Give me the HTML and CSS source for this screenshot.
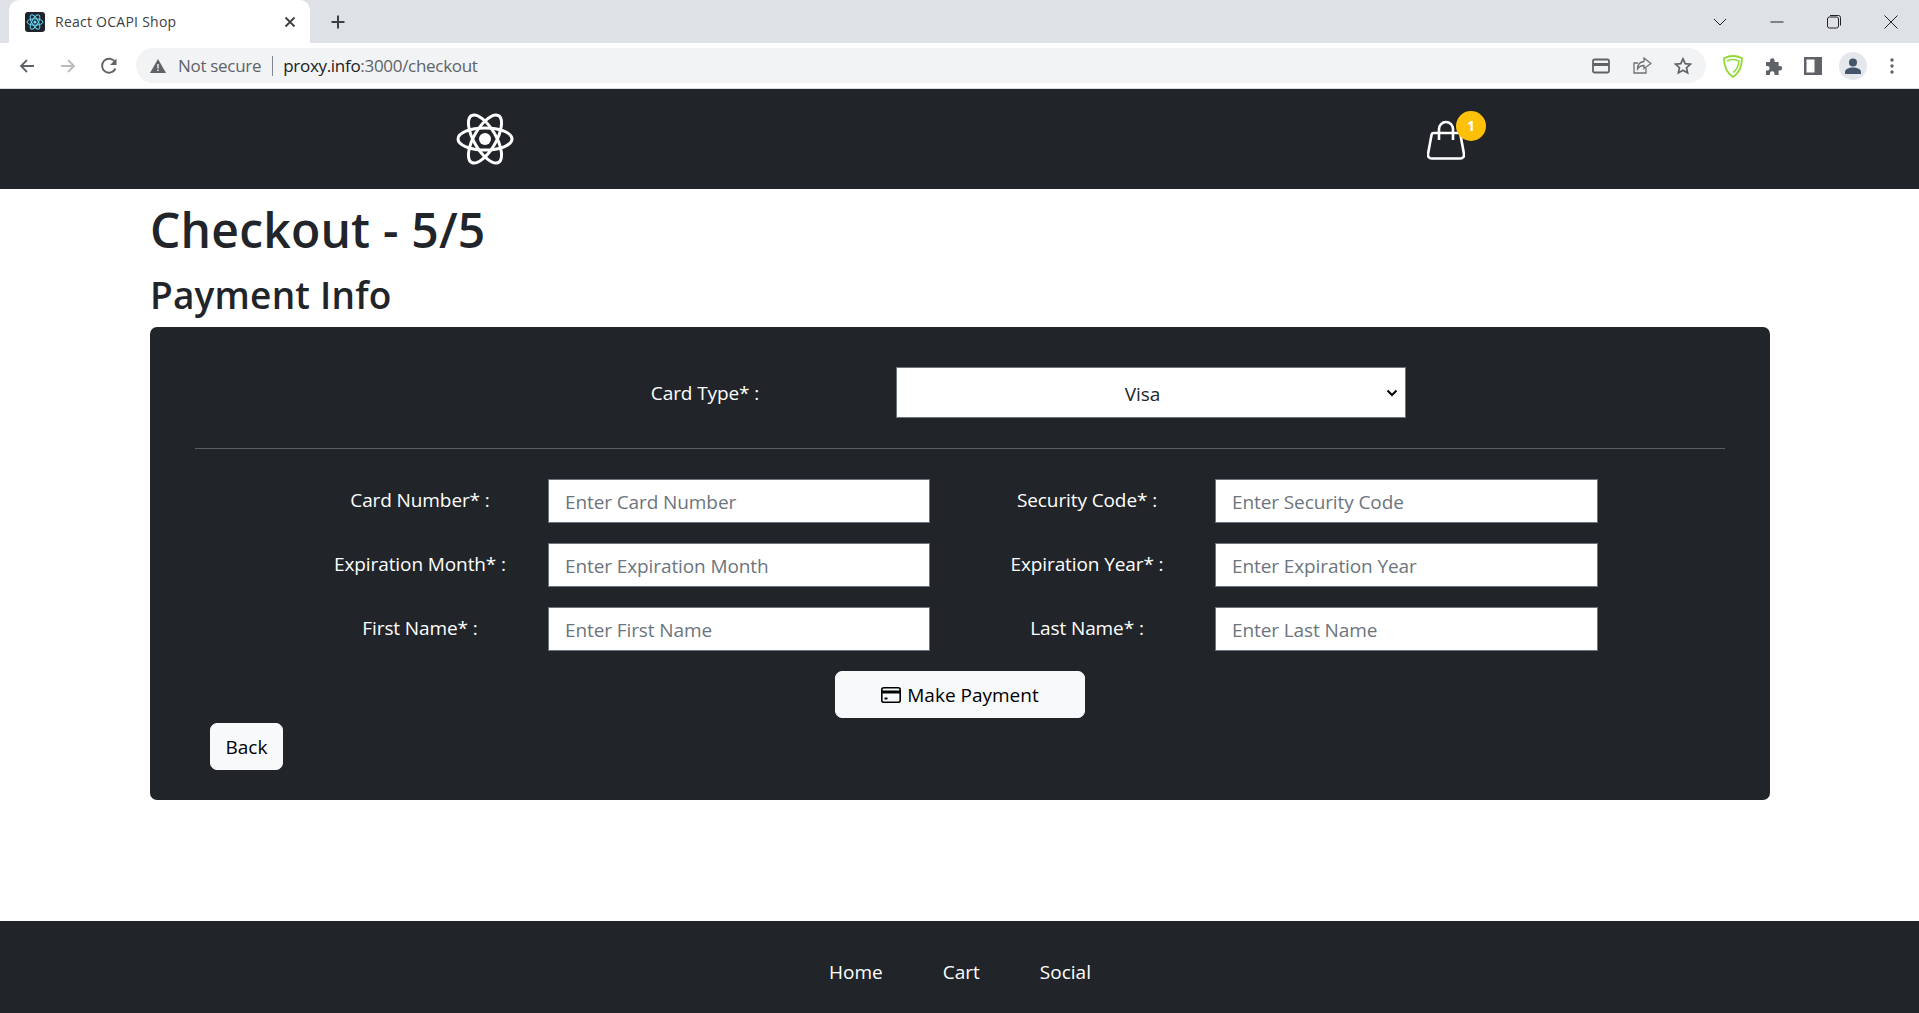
FILE: index.html
```html
<!DOCTYPE html>
<html lang="en">
<head>
    <meta charset="UTF-8">
    <meta name="viewport" content="width=device-width, initial-scale=1.0">
    <title>React OCAPI Shop</title>
    <link rel="stylesheet" href="styles.css">
</head>
<body>
    <!-- Browser chrome -->
    <div class="tab-strip">
        <div class="tab">
            <svg class="favicon" viewBox="0 0 20 20" width="20" height="20">
                <rect width="20" height="20" rx="3" fill="#20232a"/>
                <g fill="none" stroke="#61dafb" stroke-width="1">
                    <ellipse cx="10" cy="10" rx="8" ry="3.2"/>
                    <ellipse cx="10" cy="10" rx="8" ry="3.2" transform="rotate(60 10 10)"/>
                    <ellipse cx="10" cy="10" rx="8" ry="3.2" transform="rotate(120 10 10)"/>
                </g>
                <circle cx="10" cy="10" r="1.6" fill="#61dafb"/>
            </svg>
            <span class="tab-title">React OCAPI Shop</span>
            <svg class="tab-close" viewBox="0 0 12 12" width="12" height="12">
                <path d="M1.5 1.5l9 9M10.5 1.5l-9 9" stroke="#3c4043" stroke-width="1.8" fill="none"/>
            </svg>
        </div>
        <svg class="new-tab" viewBox="0 0 16 16" width="16" height="16">
            <path d="M8 1.5v13M1.5 8h13" stroke="#3c4043" stroke-width="2" fill="none"/>
        </svg>
        <div class="window-controls">
            <svg viewBox="0 0 14 14" width="14" height="14"><path d="M1 4l6 6 6-6" stroke="#202124" fill="none"/></svg>
            <svg viewBox="0 0 14 14" width="14" height="14"><path d="M0.5 7h13" stroke="#202124" fill="none"/></svg>
            <svg viewBox="0 0 14 14" width="14" height="14"><rect x="0.5" y="2" width="11" height="11" rx="2" stroke="#202124" fill="none"/><path d="M3 0.5h8.500a2 2 0 0 1 2 2v8" stroke="#202124" fill="none"/></svg>
            <svg viewBox="0 0 14 14" width="14" height="14"><path d="M0.500 0.500l13 13M13.500 0.500l-13 13" stroke="#202124" fill="none"/></svg>
        </div>
    </div>
    <div class="toolbar">
        <svg class="nav-icon" viewBox="0 0 16 16" width="16" height="16"><path d="M15 8H2M8 2L2 8l6 6" stroke="#5f6368" stroke-width="1.800" fill="none"/></svg>
        <svg class="nav-icon" viewBox="0 0 16 16" width="16" height="16"><path d="M1 8h13M8 2l6 6-6 6" stroke="#b8babd" stroke-width="1.800" fill="none"/></svg>
        <svg class="nav-icon reload" viewBox="0 0 18 18" width="18" height="18"><path d="M15.500 11.500A7 7 0 1 1 15 5" stroke="#5f6368" stroke-width="1.900" fill="none"/><path d="M16.500 1.500v6.500h-6.500z" fill="#5f6368"/></svg>
        <div class="address-bar">
            <svg class="warn-icon" viewBox="0 0 16 14" width="16" height="14"><path d="M8 0l8 14H0z" fill="#5f6368"/><path d="M7.300 5h1.400v4.500H7.300zM7.300 10.500h1.400V12H7.300z" fill="#f1f3f4"/></svg>
            <span class="not-secure">Not secure</span>
            <span class="url-sep"></span>
            <span class="url"><b>proxy.info</b>:3000/checkout</span>
            <div class="address-actions">
                <svg viewBox="0 0 18 16" width="18" height="16"><rect x="1" y="1.500" width="16" height="13" rx="1.500" stroke="#5f6368" stroke-width="1.800" fill="none"/><path d="M1 6.500h16" stroke="#5f6368" stroke-width="3" fill="none"/></svg>
                <svg viewBox="0 0 20 18" width="20" height="18"><path d="M14 11v5H2V6h4" stroke="#6d7175" stroke-width="1.300" fill="none"/><path d="M12 1l7 5.500-7 5V8.500c-3 0-5 1-6.500 3.500 0-4 2.500-7 6.500-7.500z" stroke="#6d7175" stroke-width="1.300" fill="none"/></svg>
                <svg viewBox="0 0 18 18" width="18" height="18"><path d="M9 1.800l2.200 4.800 5.200.6-3.900 3.500 1.100 5.200L9 13.300l-4.600 2.600 1.100-5.200L1.600 7.200l5.200-.6z" stroke="#5f6368" stroke-width="1.700" fill="none"/></svg>
            </div>
        </div>
        <div class="toolbar-actions">
            <svg viewBox="0 0 22 24" width="22" height="24"><path d="M11 2c3 0 6 .7 9 2.200C20 12 17 19 11 23 5 19 2 12 2 4.200 5 2.700 8 2 11 2z" stroke="#8fd92f" stroke-width="1.800" fill="none"/><path d="M5 7c4-2 8-2 12 0-.4 5-2.500 9-6 11.500" stroke="#8fd92f" stroke-width="1.500" fill="none"/></svg>
            <svg viewBox="0 0 18 18" width="18" height="18"><path d="M1 5h4V3.500a2.300 2.300 0 0 1 4.600 0V5h4v4h1.300a2.300 2.300 0 0 1 0 4.600h-1.300V18H9.500v-1.500a2.300 2.300 0 0 0-4.600 0V18H1v-4.500h1.300a2.300 2.300 0 0 0 0-4.600H1z" fill="#5f6368"/></svg>
            <svg viewBox="0 0 18 18" width="18" height="18"><path d="M0 0h18v18H0z" fill="#5f6368"/><path d="M2.500 2.500h8v13h-8z" fill="#fff"/></svg>
            <div class="avatar">
                <svg viewBox="0 0 16 16" width="16" height="16"><circle cx="8" cy="4.500" r="4" fill="#44546a"/><path d="M0 16v-2c0-3 4-4.500 8-4.500s8 1.500 8 4.500v2z" fill="#44546a"/></svg>
            </div>
            <svg viewBox="0 0 4 16" width="4" height="16"><circle cx="2" cy="2" r="1.700" fill="#5f6368"/><circle cx="2" cy="8" r="1.700" fill="#5f6368"/><circle cx="2" cy="14" r="1.700" fill="#5f6368"/></svg>
        </div>
    </div>

    <div class="page">
        <!-- Site header -->
        <header class="site-header">
            <svg class="logo" viewBox="0 0 58 52" width="58" height="52">
                <g fill="none" stroke="#fff" stroke-width="3">
                    <ellipse cx="29" cy="26" rx="27" ry="11"/>
                    <ellipse cx="29" cy="26" rx="27" ry="11" transform="rotate(60 29 26)"/>
                    <ellipse cx="29" cy="26" rx="27" ry="11" transform="rotate(120 29 26)"/>
                </g>
                <circle cx="29" cy="26" r="6" fill="#fff"/>
            </svg>
            <div class="cart">
                <svg viewBox="0 0 38 40" width="38" height="40">
                    <path d="M6.500 13h25c1 0 1.700.7 1.900 1.500L37 34c.4 2.500-1.200 4.500-3.500 4.500h-29C2.200 38.500.6 36.500 1 34l3.600-19.500c.2-.8.900-1.500 1.900-1.500z" fill="none" stroke="#fff" stroke-width="2.600"/>
                    <path d="M12 20V9a7 7 0 0 1 14 0v11" fill="none" stroke="#fff" stroke-width="2.600"/>
                </svg>
                <span class="cart-badge">1</span>
            </div>
        </header>

        <main class="content">
            <h1>Checkout - 5/5</h1>
            <h2>Payment Info</h2>

            <form class="payment-card">
                <div class="card-type-row">
                    <label for="cardType">Card Type* :</label>
                    <select id="cardType">
                        <option>Visa</option>
                    </select>
                </div>
                <hr>
                <div class="field-grid">
                    <div class="field">
                        <label for="cardNumber">Card Number* :</label>
                        <input type="text" id="cardNumber" placeholder="Enter Card Number">
                    </div>
                    <div class="field">
                        <label for="securityCode">Security Code* :</label>
                        <input type="text" id="securityCode" placeholder="Enter Security Code">
                    </div>
                    <div class="field">
                        <label for="expMonth">Expiration Month* :</label>
                        <input type="text" id="expMonth" placeholder="Enter Expiration Month">
                    </div>
                    <div class="field">
                        <label for="expYear">Expiration Year* :</label>
                        <input type="text" id="expYear" placeholder="Enter Expiration Year">
                    </div>
                    <div class="field">
                        <label for="firstName">First Name* :</label>
                        <input type="text" id="firstName" placeholder="Enter First Name">
                    </div>
                    <div class="field">
                        <label for="lastName">Last Name* :</label>
                        <input type="text" id="lastName" placeholder="Enter Last Name">
                    </div>
                </div>
                <div class="pay-row">
                    <button type="button" class="btn btn-pay">
                        <svg viewBox="0 0 20 16" width="20" height="16">
                            <rect x="0.800" y="0.800" width="18.400" height="14.400" rx="2" fill="none" stroke="#000" stroke-width="1.600"/>
                            <path d="M1 5h18" stroke="#000" stroke-width="3"/>
                            <path d="M3.500 10.500h3v2h-3z" fill="#000"/>
                        </svg>
                        Make Payment
                    </button>
                </div>
                <button type="button" class="btn btn-back">Back</button>
            </form>
        </main>

        <!-- Site footer -->
        <footer class="site-footer">
            <a href="#">Home</a>
            <a href="#">Cart</a>
            <a href="#">Social</a>
        </footer>
    </div>
</body>
</html>
```

FILE: styles.css
```css
* {
    box-sizing: border-box;
}

html, body {
    height: 100%;
}

body {
    margin: 0;
    display: flex;
    flex-direction: column;
    font-family: "Open Sans", "Noto Sans", sans-serif;
    color: #212529;
    background-color: #fff;
    overflow: hidden;
}

/* Browser chrome */
.tab-strip {
    height: 43px;
    flex: none;
    display: flex;
    align-items: center;
    background-color: #dee1e6;
    padding-left: 9px;
}

.tab {
    width: 301px;
    height: 43px;
    display: flex;
    align-items: center;
    padding-left: 16px;
    background-color: #fff;
    border-radius: 10px 10px 0 0;
}

.tab-title {
    margin-left: 10px;
    font-size: 14px;
    color: #3c4043;
    letter-spacing: 0.25px;
    flex: 1;
}

.tab-close {
    margin-right: 14px;
}

.new-tab {
    margin-left: 20px;
}

.window-controls {
    margin-left: auto;
    display: flex;
    gap: 43px;
    padding-right: 21px;
    align-items: center;
}

.toolbar {
    height: 46px;
    flex: none;
    display: flex;
    align-items: center;
    background-color: #fff;
    border-bottom: 1px solid #dadce0;
    padding-left: 19px;
    gap: 25px;
}

.reload {
    margin-left: -1px;
}

.address-bar {
    width: 1570px;
    height: 35px;
    margin-left: -7px;
    display: flex;
    align-items: center;
    background-color: #f1f3f4;
    border-radius: 18px;
    padding-left: 14px;
    font-size: 17px;
    letter-spacing: -0.3px;
}

.not-secure {
    margin-left: 12px;
    color: #5f6368;
}

.url-sep {
    width: 1px;
    height: 20px;
    margin: 0 10px 0 11px;
    background-color: #80868b;
}

.url {
    color: #5f6368;
}

.url b {
    font-weight: 400;
    color: #202124;
}

.address-actions {
    margin-left: auto;
    padding-right: 14px;
    display: flex;
    align-items: center;
    gap: 22px;
}

.toolbar-actions {
    display: flex;
    align-items: center;
    gap: 21px;
    margin-left: -9px;
}

.avatar {
    width: 28px;
    height: 28px;
    margin: 0 2px 0 -4px;
    display: flex;
    align-items: center;
    justify-content: center;
    border-radius: 50%;
    background-color: #e4e7ec;
}

/* Page */
.page {
    flex: 1;
    display: flex;
    flex-direction: column;
    min-height: 0;
}

.site-header {
    height: 100px;
    flex: none;
    display: flex;
    align-items: center;
    background-color: #212529;
    padding-left: 456px;
}

.cart {
    position: relative;
    margin-left: 913px;
    margin-top: 1px;
    height: 40px;
}

.cart-badge {
    position: absolute;
    top: -9px;
    left: 29px;
    width: 30px;
    height: 30px;
    border-radius: 50%;
    display: flex;
    align-items: center;
    justify-content: center;
    background-color: #ffc107;
    color: #fff;
    font-size: 14px;
    font-weight: 700;
}

.content {
    flex: 1;
    padding: 0 149px 0 150px;
}

h1 {
    margin: 12px 0 0;
    font-size: 48px;
    font-weight: 600;
    line-height: 58px;
    letter-spacing: 0.2px;
}

h2 {
    margin: 13px 0 0;
    font-size: 37px;
    font-weight: 600;
    line-height: 46px;
    letter-spacing: 0.2px;
}

.payment-card {
    margin-top: 9px;
    height: 473px;
    padding: 40px 45px 0;
    background-color: #212529;
    border-radius: 7px;
    color: #fff;
    font-size: 19px;
}

.card-type-row {
    display: flex;
    align-items: center;
    padding-left: 319px;
}

.card-type-row label {
    width: 382px;
    text-align: center;
    letter-spacing: -0.1px;
}

select {
    width: 510px;
    height: 51px;
    padding: 2px 17px 0 0;
    border: 1px solid #6c757d;
    border-radius: 0;
    appearance: none;
    background: #fff url("data:image/svg+xml,%3Csvg xmlns='http://www.w3.org/2000/svg' width='12' height='8'%3E%3Cpath d='M1.500 1.500L6 6l4.500-4.500' fill='none' stroke='%23000' stroke-width='2'/%3E%3C/svg%3E") no-repeat right 7px center;
    color: #212529;
    font-family: inherit;
    font-size: 19px;
    text-align: center;
}

hr {
    margin: 30px 0 30px;
    border: 0;
    border-top: 1px solid #5b5f63;
}

.field-grid {
    display: grid;
    grid-template-columns: 638px 639px;
    column-gap: 29px;
    row-gap: 20px;
    padding-left: 97px;
}

.field {
    display: flex;
    align-items: center;
}

.field label {
    width: 256px;
    text-align: center;
    margin-top: -2px;
    letter-spacing: -0.1px;
}

.field input {
    flex: 1;
    height: 44px;
    padding: 2px 16px 0;
    border: 1px solid #6c757d;
    background-color: #fff;
    font-family: inherit;
    font-size: 19px;
    letter-spacing: -0.1px;
    color: #212529;
}

.field input::placeholder {
    color: #6c757d;
}

.pay-row {
    margin-top: 20px;
    display: flex;
    justify-content: center;
}

.btn {
    height: 47px;
    border: 1px solid #f8f9fa;
    border-radius: 7px;
    background-color: #f8f9fa;
    color: #000;
    font-family: inherit;
    font-size: 19px;
    padding: 0;
}

.btn-pay {
    width: 250px;
    display: flex;
    align-items: center;
    justify-content: center;
    gap: 6px;
}

.btn-back {
    display: block;
    width: 73px;
    margin: 5px 0 0 15px;
}

.site-footer {
    height: 92px;
    flex: none;
    display: flex;
    align-items: center;
    justify-content: center;
    gap: 60px;
    background-color: #212529;
    padding: 10px 0 0 1px;
}

.site-footer a {
    color: #fff;
    font-size: 19px;
    text-decoration: none;
}
```
